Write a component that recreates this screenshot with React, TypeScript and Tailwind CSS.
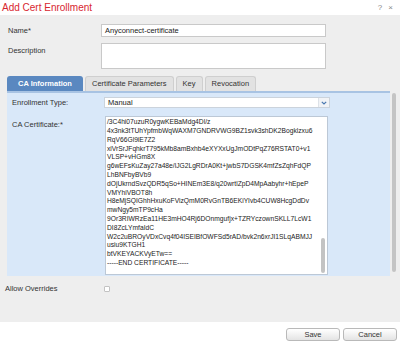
import React from 'react';

const certLines = [
  '/3C4hi07uzuR0ygwKEBaMdg4Dl/z',
  '4x3nk3tTUhYpfmbWqWAXM7GNDRVWG9BZ1svk3shDK2Bogklzxu6',
  'RqV66Gl9iE7Z2',
  'xiVrSrJFqhkrT795kMb8amBxhb4eXYXxUgJmODtPqZ76RSTAT0+v1',
  'VLSP+vHGm8X',
  'g6wEFsKuZay27a48e/lJG2LgRDrA0Kt+jwbS7DGSK4mfZsZqhFdQP',
  'LhBNFbyBVb9',
  'dOjUkrndSvzQDR5qSo+HINEm3E8/q20wrtlZpD4MpAabyhr+hEpeP',
  'VMYhiVBOT8h',
  'H8eMjSQIGhhHxuKoFVizQmM0RvGnTB6EKiYIvb4CUW8HcgDdDv',
  'mwNgy5mTP9cHa',
  '9Or3RIWRzEa11HE3mHO4Rj6DOnmgufjx+TZRYczownSKLL7LcW1',
  'DI8ZcLYmfaIdC',
  'W2c2uBROyVDxCvq4f04ISEIBfOWFSd5rAD/bvk2n6xrJI1SLqABMJJ',
  'usiu9KTGH1',
  'btVKEYACKVyETw==',
  '-----END CERTIFICATE-----',
];

const tabs = ['CA Information', 'Certificate Parameters', 'Key', 'Revocation'];

export default function App() {
  return (
    <div className="w-[400px] h-[343px] bg-white flex flex-col overflow-hidden font-['Liberation_Sans',Arial,sans-serif] text-[#333]">
      {/* title bar */}
      <div className="h-[15px] flex items-center justify-between pl-[2px] pr-[5px]">
        <span className="text-[10px] text-[#d8262f] leading-none">Add Cert Enrollment</span>
        <span className="text-[8px] text-[#888] leading-none tracking-[2px]">? ×</span>
      </div>

      {/* body */}
      <div className="h-[307px] bg-[#eeeeee] flex flex-col">
        <div className="flex items-center mt-[9px]">
          <span className="w-[101px] pl-[8px] text-[7.5px]">Name*</span>
          <div className="w-[225px] h-[13px] border border-[#c9c9c9] bg-white flex items-center pl-[3px] text-[7.5px] text-[#222]">
            Anyconnect-certificate
          </div>
        </div>
        <div className="flex items-start mt-[6px]">
          <span className="w-[101px] pl-[8px] pt-[2px] text-[7.5px]">Description</span>
          <div className="w-[225px] h-[26px] border border-[#c9c9c9] bg-white" />
        </div>

        {/* tabs */}
        <div className="flex items-end gap-[2px] pl-[7px] mt-[7px]">
          {tabs.map((t, i) =>
            i === 0 ? (
              <div key={t} className="h-[15px] w-[76px] rounded-t-[3px] bg-[#5a88c0] text-white font-bold text-[7.5px] flex items-center justify-center">
                {t}
              </div>
            ) : (
              <div key={t} className="h-[15px] px-[6px] rounded-t-[3px] bg-[#e2e2e2] border border-b-0 border-[#cfcfcf] text-[7.5px] flex items-center">
                {t}
              </div>
            )
          )}
        </div>

        {/* panel + outer scrollbar */}
        <div className="flex">
          <div className="ml-[7px] w-[383px] h-[185px] bg-[#d9e8f9] border-t-2 border-[#a8c3e3] flex flex-col">
            <div className="flex items-center mt-[4px]">
              <span className="w-[97px] pl-[5px] text-[7.5px]">Enrollment Type:</span>
              <div className="w-[226px] h-[11px] bg-white border border-[#cbd3dc] flex items-center">
                <span className="flex-1 pl-[3px] text-[7.5px] text-[#222]">Manual</span>
                <div className="w-[11px] h-full bg-[#f1f3f6] border-l border-[#dde2e8] flex items-center justify-center">
                  <svg width="6" height="4" viewBox="0 0 6 4">
                    <path d="M0.8 0.8 L3 3 L5.2 0.8" stroke="#4a78b0" strokeWidth="1.2" fill="none" />
                  </svg>
                </div>
              </div>
            </div>
            <div className="flex items-start mt-[8px]">
              <span className="w-[98px] pl-[5px] pt-[3px] text-[7.5px]">CA Certificate:*</span>
              <div className="w-[223px] h-[159px] bg-white border border-[#bcc8d6] flex overflow-hidden">
                <div className="flex-1 pl-[1px] pt-[1px] text-[6.7px] leading-[8.8px] text-[#222] whitespace-nowrap">
                  {certLines.map((l, i) => (
                    <div key={i}>{l}</div>
                  ))}
                </div>
                <div className="w-[6px] flex flex-col justify-end pb-[1px] pr-[1px]">
                  <div className="h-[35px] w-[4px] rounded-[2px] bg-[#c3c3c3]" />
                </div>
              </div>
            </div>
          </div>
          <div className="ml-[2px] mt-[2px] w-[4px] h-[179px] rounded-[2px] bg-[#c4c4c4]" />
        </div>

        <div className="flex items-center mt-[9px] h-[8px]">
          <span className="w-[104px] pl-[5px] text-[7.5px]">Allow Overrides</span>
          <div className="w-[6px] h-[6px] bg-white border border-[#c2c2c2] rounded-[1px]" />
        </div>
      </div>

      {/* footer */}
      <div className="flex-1 flex justify-end items-start gap-[3px] pt-[6px] pr-[3px]">
        <button className="w-[54px] h-[13px] rounded-[3px] border border-[#b9b9b9] bg-gradient-to-b from-white to-[#e4e4e4] text-[7.5px] text-[#333] flex items-center justify-center">
          Save
        </button>
        <button className="w-[54px] h-[13px] rounded-[3px] border border-[#b9b9b9] bg-gradient-to-b from-white to-[#e4e4e4] text-[7.5px] text-[#333] flex items-center justify-center">
          Cancel
        </button>
      </div>
    </div>
  );
}
